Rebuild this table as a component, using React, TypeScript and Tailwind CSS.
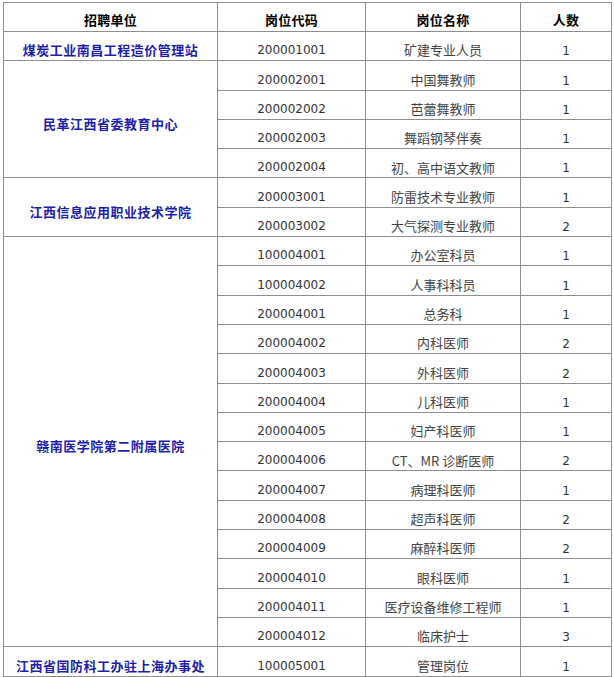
const groups: { unit: string; rows: [string, string, string][] }[] = [
  { unit: "煤炭工业南昌工程造价管理站", rows: [["200001001", "矿建专业人员", "1"]] },
  {
    unit: "民革江西省委教育中心",
    rows: [
      ["200002001", "中国舞教师", "1"],
      ["200002002", "芭蕾舞教师", "1"],
      ["200002003", "舞蹈钢琴伴奏", "1"],
      ["200002004", "初、高中语文教师", "1"],
    ],
  },
  {
    unit: "江西信息应用职业技术学院",
    rows: [
      ["200003001", "防雷技术专业教师", "1"],
      ["200003002", "大气探测专业教师", "2"],
    ],
  },
  {
    unit: "赣南医学院第二附属医院",
    rows: [
      ["100004001", "办公室科员", "1"],
      ["100004002", "人事科科员", "1"],
      ["200004001", "总务科", "1"],
      ["200004002", "内科医师", "2"],
      ["200004003", "外科医师", "2"],
      ["200004004", "儿科医师", "1"],
      ["200004005", "妇产科医师", "1"],
      ["200004006", "CT、MR 诊断医师", "2"],
      ["200004007", "病理科医师", "1"],
      ["200004008", "超声科医师", "2"],
      ["200004009", "麻醉科医师", "2"],
      ["200004010", "眼科医师", "1"],
      ["200004011", "医疗设备维修工程师", "1"],
      ["200004012", "临床护士", "3"],
    ],
  },
  { unit: "江西省国防科工办驻上海办事处", rows: [["100005001", "管理岗位", "1"]] },
];

const cjk = "font-['Noto_Sans_CJK_SC',sans-serif]";
const cell = "border border-[#8f8f8f] p-0 text-center";

export default function App() {
  return (
    <div className="w-[614px] h-[677px] bg-white overflow-hidden pt-[2px] pl-[3px]">
      <table className="table-fixed border-collapse w-[608px]">
        <colgroup>
          <col className="w-[214px]" />
          <col className="w-[148px]" />
          <col className="w-[155px]" />
          <col className="w-[91px]" />
        </colgroup>
        <thead>
          <tr className="h-[29px]">
            {["招聘单位", "岗位代码", "岗位名称", "人数"].map((h) => (
              <th key={h} className={`${cell} pt-[6px] ${cjk} text-[13px] font-bold text-black tracking-[0.3px]`}>
                {h}
              </th>
            ))}
          </tr>
        </thead>
        <tbody>
          {groups.map((g) =>
            g.rows.map(([code, name, num], i) => (
              <tr key={code} className="h-[29.3px]">
                {i === 0 && (
                  <td
                    rowSpan={g.rows.length}
                    className={`${cell} ${cjk} text-[13px] font-bold text-[#1e1eaa] tracking-[0.5px] pt-[8px]`}
                  >
                    {g.unit}
                  </td>
                )}
                <td className={`${cell} align-bottom pb-[1px] font-['DejaVu_Sans',sans-serif] text-[12px] text-[#333]`}>
                  {code}
                </td>
                <td className={`${cell} pt-[8px] ${cjk} text-[13px] text-[#444]`}>{name}</td>
                <td className={`${cell} align-bottom pb-0 font-['DejaVu_Sans',sans-serif] text-[12px] text-[#333]`}>
                  {num}
                </td>
              </tr>
            ))
          )}
        </tbody>
      </table>
    </div>
  );
}
